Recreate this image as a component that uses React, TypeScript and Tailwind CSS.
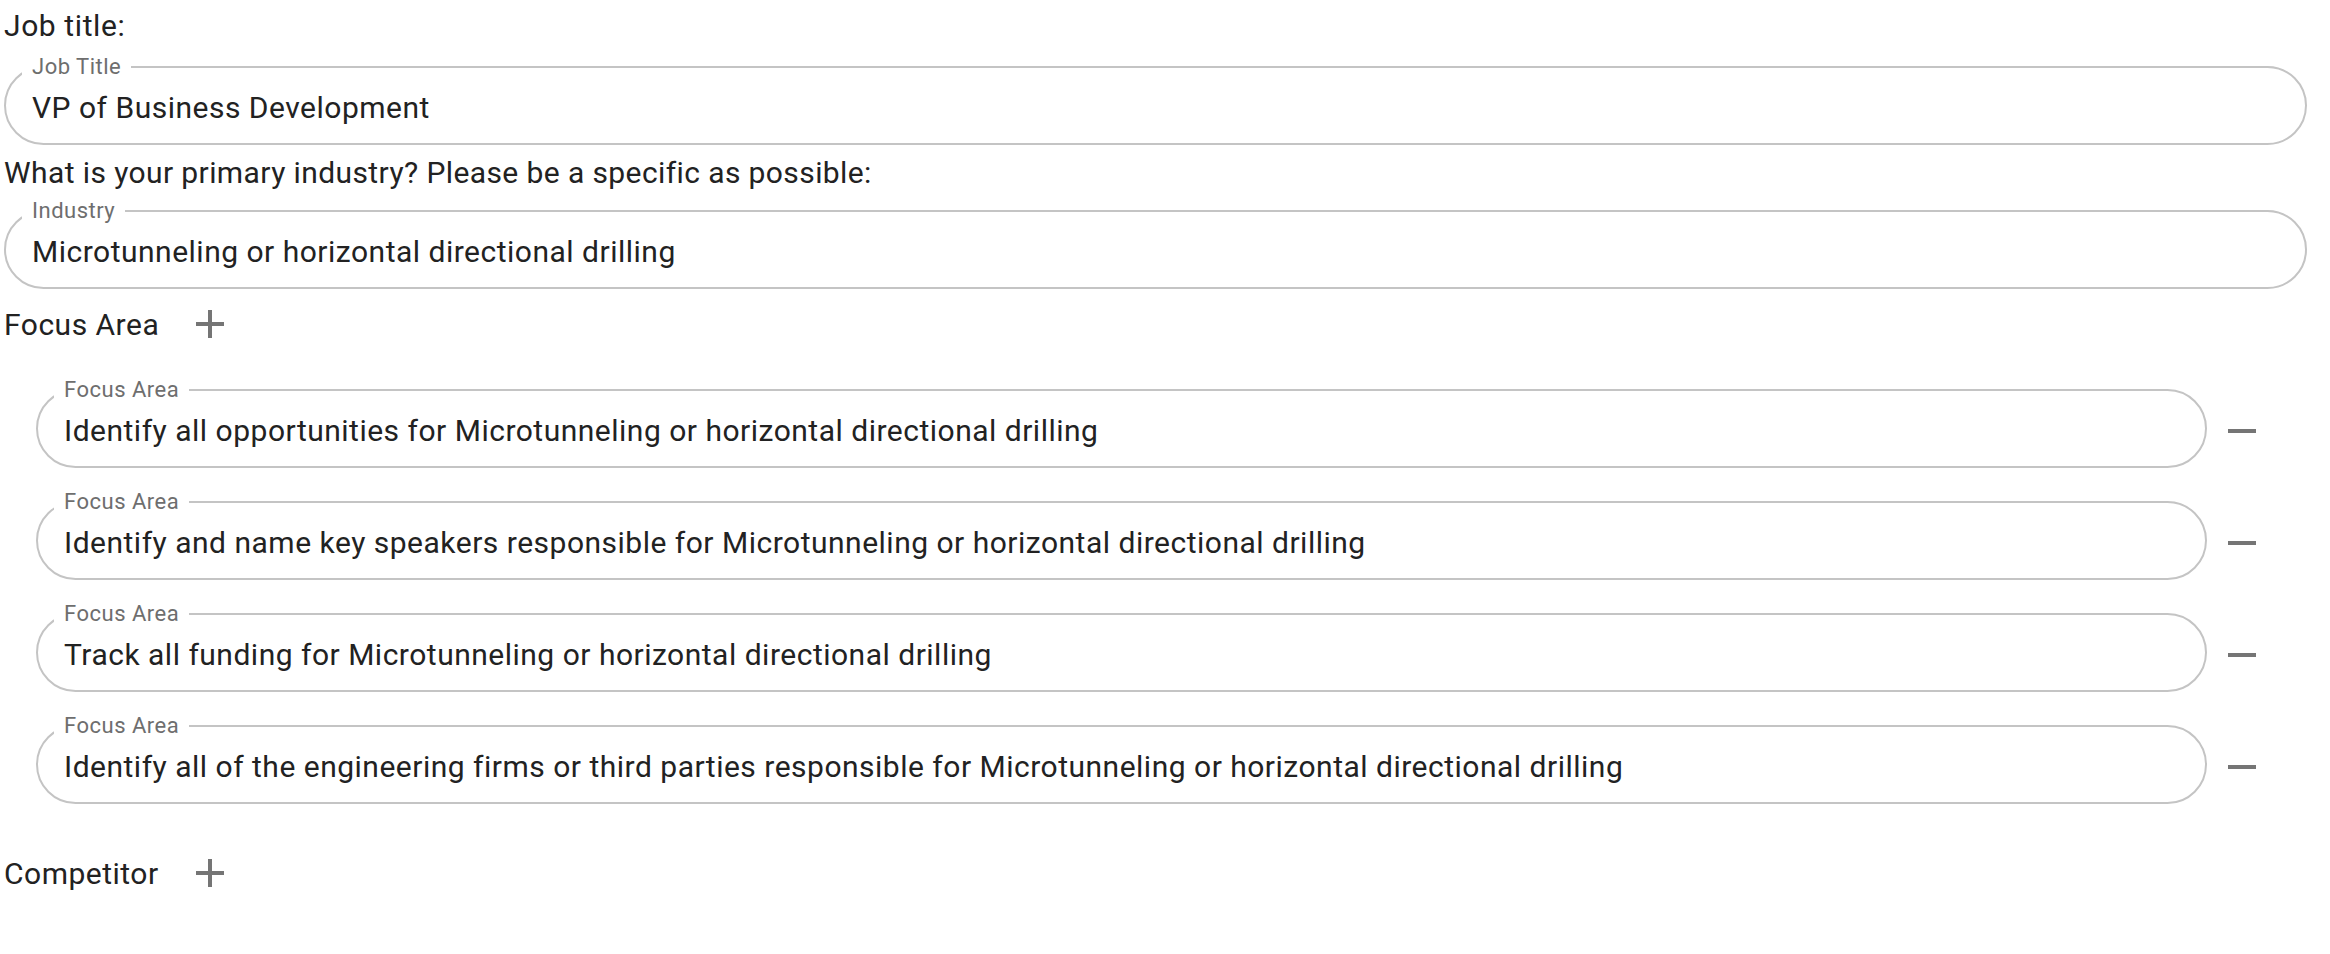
import React from "react";

// MUI-like outlined text field, pill shaped, notch made by fieldset/legend
function OutlinedField({ label, value }: { label: string; value: string }) {
    return (
        <fieldset className="w-full min-w-0 rounded-full border-2 border-[#c4c4c4] px-[16px]">
            <legend className="px-[10px] text-[22px] leading-[20px] tracking-[0.5px] text-[#6e6e6e]">{label}</legend>
            <div className="pl-[10px] pt-[15px] pb-[19px] text-[30px] leading-[32px] tracking-[0.5px] text-[#222222] whitespace-nowrap overflow-hidden">
                {value}
            </div>
        </fieldset>
    );
}

function AddIcon() {
    return (
        <svg viewBox="0 0 24 24" className="h-[48px] w-[48px] fill-[#757575]">
            <path d="M19 13h-6v6h-2v-6H5v-2h6V5h2v6h6v2z" />
        </svg>
    );
}

function RemoveIcon() {
    return (
        <svg viewBox="0 0 24 24" className="h-[48px] w-[48px] fill-[#757575]">
            <path d="M19 13H5v-2h14v2z" />
        </svg>
    );
}

function SectionHeader({ title }: { title: string }) {
    return (
        <div className="flex h-[48px] items-center">
            <span className="pt-[2px] text-[30px] leading-[36px] tracking-[0.5px] text-[#222222]">{title}</span>
            <button className="ml-[27px] flex h-[48px] w-[48px] items-center justify-center">
                <AddIcon />
            </button>
        </div>
    );
}

const focusAreas = [
    "Identify all opportunities for Microtunneling or horizontal directional drilling",
    "Identify and name key speakers responsible for Microtunneling or horizontal directional drilling",
    "Track all funding for Microtunneling or horizontal directional drilling",
    "Identify all of the engineering firms or third parties responsible for Microtunneling or horizontal directional drilling",
];

export default function App() {
    return (
        <div className="min-h-screen bg-white pl-[4px] pr-[23px] font-['Roboto',sans-serif]">
            <div className="pt-[8px] text-[30px] leading-[36px] tracking-[0.6px] text-[#222222]">Job title:</div>
            <div className="mt-[13px]">
                <OutlinedField label="Job Title" value="VP of Business Development" />
            </div>

            <div className="mt-[10px] text-[30px] leading-[36px] tracking-[0.4px] text-[#222222]">
                What is your primary industry? Please be a specific as possible:
            </div>
            <div className="mt-[10px]">
                <OutlinedField label="Industry" value="Microtunneling or horizontal directional drilling" />
            </div>

            <div className="mt-[11px]">
                <SectionHeader title="Focus Area" />
            </div>

            <div className="mt-[32px] flex flex-col gap-[24px] pl-[32px]">
                {focusAreas.map((text, i) => (
                    <div key={i} className="flex items-start">
                        <div className="w-[2171px]">
                            <OutlinedField label="Focus Area" value={text} />
                        </div>
                        <button className="ml-[11px] mt-[27px] flex h-[48px] w-[48px] items-center justify-center">
                            <RemoveIcon />
                        </button>
                    </div>
                ))}
            </div>

            <div className="mt-[45px]">
                <SectionHeader title="Competitor" />
            </div>
        </div>
    );
}
